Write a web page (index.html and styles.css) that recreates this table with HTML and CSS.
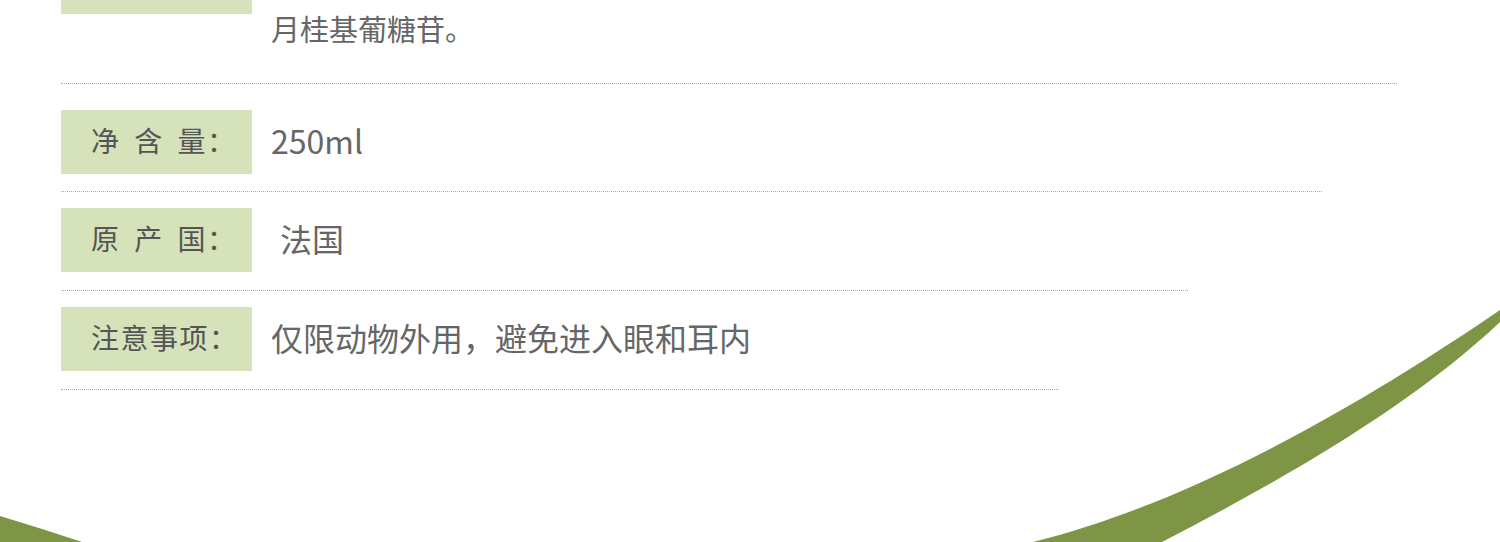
FILE: index.html
```html
<!DOCTYPE html>
<html lang="zh-CN">
  <head>
    <meta charset="UTF-8" />
    <meta name="viewport" content="width=device-width, initial-scale=1.0" />
    <title>产品信息</title>
    <link rel="stylesheet" href="styles.css">
  </head>
  <body>
    <main class="page">
      <svg class="page--swoosh" viewBox="0 0 1500 542" preserveAspectRatio="none" aria-hidden="true">
        <path d="M1033 542 C1203 500 1380 392 1500 310 L1500 322 C1410 407 1282 480 1162 542 Z" />
        <path d="M0 516 Q40 528 82 542 L0 542 Z" />
      </svg>

      <div class="info--list">
        <div class="row row--top line--1">
          <div class="row--label"></div>
          <div class="row--value">月桂基葡糖苷。</div>
        </div>
        <div class="row row--spaced line--2">
          <div class="row--label">净 含 量：</div>
          <div class="row--value">250ml</div>
        </div>
        <div class="row line--3">
          <div class="row--label">原 产 国：</div>
          <div class="row--value row--value-indent">法国</div>
        </div>
        <div class="row line--4">
          <div class="row--label">注意事项：</div>
          <div class="row--value">仅限动物外用，避免进入眼和耳内</div>
        </div>
      </div>
    </main>
  </body>
</html>
```

FILE: styles.css
```css
* {
  box-sizing: border-box;
}

html,
body {
  height: 100%;
  margin: 0;
  background-color: #ffffff;
  font-family: "Noto Sans CJK SC", "Noto Sans", sans-serif;
}

.page {
  position: relative;
  height: 542px;
  width: 1500px;
  overflow: hidden;
}

.page--swoosh {
  position: absolute;
  left: 0;
  top: 0;
  width: 100%;
  height: 100%;
  fill: #7e9545;
}

.info--list {
  position: relative;
  display: flex;
  flex-direction: column;
  padding-left: 61px;
}

.row {
  display: flex;
  align-items: center;
  gap: 19px;
  padding-top: 16px;
  padding-bottom: 18px;
  border-bottom: 1px dotted #a8a8a8;
}

.row--top {
  align-items: flex-start;
  margin-top: -50px;
  padding-top: 0;
  padding-bottom: 32px;
}

.row--spaced {
  padding-top: 26px;
  padding-bottom: 17px;
}

.row--label {
  flex: none;
  width: 191px;
  height: 64px;
  padding-left: 30px;
  padding-bottom: 4px;
  display: flex;
  align-items: center;
  background-color: #d6e2ba;
  color: #555555;
  font-size: 28px;
  letter-spacing: 1.5px;
  word-spacing: 6px;
  white-space: pre;
}

.row--value {
  color: #666666;
  font-size: 32px;
  line-height: 46px;
  margin-bottom: 4px;
}

.row--top .row--value {
  font-size: 29px;
  margin-top: 55px;
  margin-bottom: 0;
}

.row--value-indent {
  padding-left: 9px;
}

.line--1 {
  width: 1336px;
}

.line--2 {
  width: 1261px;
}

.line--3 {
  width: 1127px;
}

.line--4 {
  width: 998px;
}
```
